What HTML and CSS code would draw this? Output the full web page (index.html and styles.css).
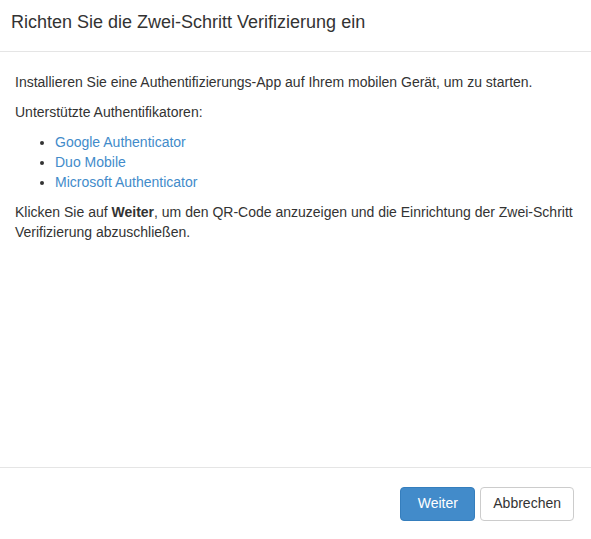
FILE: index.html
```html
<!DOCTYPE html>
<html lang="de">
<head>
    <meta charset="UTF-8">
    <title>Zwei-Schritt Verifizierung</title>
    <link rel="stylesheet" href="styles.css">
</head>
<body>

    <div class="modal">
        <div class="modal-header">
            <h4 class="modal-title">Richten Sie die Zwei-Schritt Verifizierung ein</h4>
        </div>

        <div class="modal-body">
            <p>Installieren Sie eine Authentifizierungs-App auf Ihrem mobilen Gerät, um zu starten.</p>
            <p>Unterstützte Authentifikatoren:</p>
            <ul>
                <li><a href="#">Google Authenticator</a></li>
                <li><a href="#">Duo Mobile</a></li>
                <li><a href="#">Microsoft Authenticator</a></li>
            </ul>
            <p>Klicken Sie auf <strong>Weiter</strong>, um den QR-Code anzuzeigen und die Einrichtung der Zwei-Schritt Verifizierung abzuschließen.</p>
        </div>

        <div class="modal-footer">
            <button class="btn btn-primary">Weiter</button>
            <button class="btn btn-default">Abbrechen</button>
        </div>
    </div>

</body>
</html>
```

FILE: styles.css
```css
body {
    font-family: "Liberation Sans", Arial, sans-serif;
    font-size: 14px;
    line-height: 1.42857;
    color: #333;
    background-color: #fff;
    margin: 0;
}
.modal {
    display: flex;
    flex-direction: column;
    height: 539px;
}
.modal-header {
    padding: 13px 15px 18px 11px;
    border-bottom: 1px solid #e5e5e5;
}
.modal-title {
    margin: 0;
    font-size: 18px;
    font-weight: normal;
    line-height: 1.1;
}
.modal-body {
    flex: 1;
    padding: 21px 15px 15px;
}
p {
    margin: 0 0 10px;
}
ul {
    margin: 0 0 10px;
    padding-left: 40px;
}
a {
    color: #428bca;
    text-decoration: none;
}
.modal-footer {
    display: flex;
    justify-content: flex-end;
    gap: 5px;
    padding: 19px 17px 18px;
    border-top: 1px solid #e5e5e5;
}
.btn {
    font-family: inherit;
    font-size: 14px;
    line-height: 1.42857;
    padding: 6px 12px;
    border: 1px solid transparent;
    border-radius: 4px;
    cursor: pointer;
}
.btn-primary {
    min-width: 75px;
    color: #fff;
    background-color: #428bca;
    border-color: #357ebd;
}
.btn-default {
    color: #333;
    background-color: #fff;
    border-color: #ccc;
}
```
